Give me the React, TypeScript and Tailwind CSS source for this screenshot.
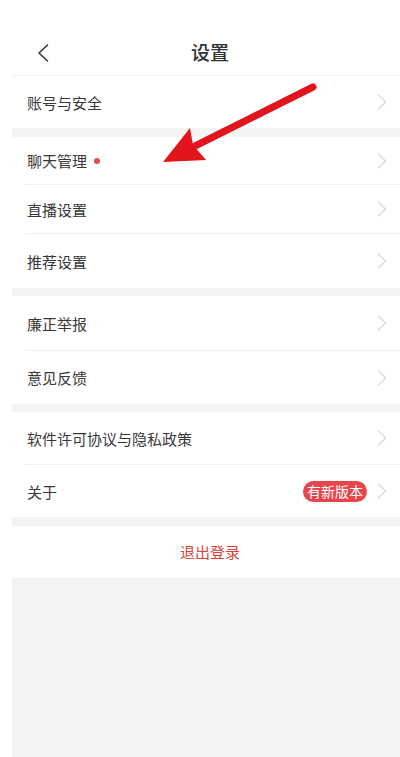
import React from "react";

const font = { fontFamily: '"Noto Sans CJK SC", "Noto Sans", sans-serif' };

function Chevron() {
  return (
    <svg width="10" height="16" viewBox="0 0 10 16" className="shrink-0">
      <path d="M1.5 1 L8.5 8 L1.5 15" fill="none" stroke="#d9d9d9" strokeWidth="1.3" strokeLinecap="round" strokeLinejoin="round" />
    </svg>
  );
}

function Row({ label, h, border, dot, badge }: { label: string; h: string; border?: boolean; dot?: boolean; badge?: boolean }) {
  return (
    <div className={`pl-[13px] bg-white ${h}`}>
      <div className={`h-full flex items-center justify-between pl-[2px] pr-[21px] ${border ? "border-b border-[#efefef]" : ""}`}>
        <div className="flex items-center">
          <span className="text-[15px] text-[#383838] leading-none">{label}</span>
          {dot && <span className="ml-[7px] w-[6px] h-[6px] rounded-full bg-[#e5484d]" />}
        </div>
        <div className="flex items-center gap-[10px]">
          {badge && (
            <span className="h-[21px] px-[4px] rounded-full bg-[#e6464b] text-white text-[14px] leading-[21px]">有新版本</span>
          )}
          <Chevron />
        </div>
      </div>
    </div>
  );
}

function Band({ h }: { h: string }) {
  return <div className={`${h} bg-[#f4f4f4]`} />;
}

export default function App() {
  return (
    <div className="w-[400px] h-[757px] bg-white overflow-hidden relative" style={font}>
      <div className="ml-3 w-[396px] h-full flex flex-col">
        <div className="h-[76px] pt-[30px] border-b border-[#efefef] flex items-center relative">
          <div className="pl-[25px] flex items-center">
            <svg width="12" height="18" viewBox="0 0 12 18">
              <path d="M10.5 1 L2 9 L10.5 17" fill="none" stroke="#333" strokeWidth="1.5" strokeLinecap="round" strokeLinejoin="round" />
            </svg>
          </div>
          <div className="flex-1 text-center text-[19px] font-medium text-[#333333] -ml-[37px]">设置</div>
        </div>
        <Row label="账号与安全" h="h-[52px]" />
        <Band h="h-[9px]" />
        <Row label="聊天管理" h="h-[48px]" border dot />
        <Row label="直播设置" h="h-[49px]" border />
        <Row label="推荐设置" h="h-[54px]" />
        <Band h="h-[8px]" />
        <Row label="廉正举报" h="h-[55px]" border />
        <Row label="意见反馈" h="h-[53px]" />
        <Band h="h-[8px]" />
        <Row label="软件许可协议与隐私政策" h="h-[53px]" border />
        <Row label="关于" h="h-[52px]" badge />
        <Band h="h-[9px]" />
        <div className="h-[52px] flex items-center justify-center text-[15px] text-[#d9423c]">退出登录</div>
        <div className="flex-1 bg-[#f4f4f4]" />
      </div>
      <svg className="absolute left-0 top-0 pointer-events-none" width="400" height="757" viewBox="0 0 400 757">
        <line x1="313" y1="87" x2="195" y2="146" stroke="#e3141b" strokeWidth="7" strokeLinecap="round" />
        <polygon points="163,162 190,128 193,145 206,160" fill="#e3141b" />
      </svg>
    </div>
  );
}
